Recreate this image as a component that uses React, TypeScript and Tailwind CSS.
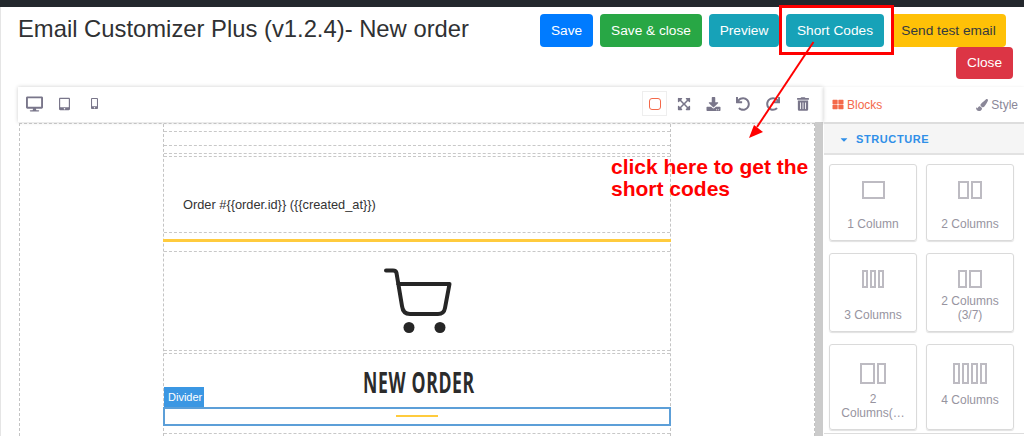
import React from 'react';
import {
  FaDesktop,
  FaTabletAlt,
  FaMobileAlt,
  FaExpandArrowsAlt,
  FaDownload,
  FaUndo,
  FaRedo,
  FaTrashAlt,
  FaThLarge,
  FaPaintBrush,
  FaCaretDown,
} from 'react-icons/fa';

const sans = { fontFamily: '"Liberation Sans", Arial, sans-serif' };

const BlockIcon = ({ cols, w, h }: { cols: number[]; w: number; h: number }) => (
  <div className="flex justify-center gap-[2px]" style={{ width: w, height: h }}>
    {cols.map((c, i) => (
      <div key={i} className="border-2 border-[#bdbbc2] h-full" style={{ flex: c }} />
    ))}
  </div>
);

const blocks = [
  { label: '1 Column', cols: [1], w: 23, ih: 18, h: 'h-[77px] pt-[16px]', gap: 'mt-[18px]' },
  { label: '2 Columns', cols: [1, 1], w: 24, ih: 18, h: 'h-[77px] pt-[16px]', gap: 'mt-[18px]' },
  { label: '3 Columns', cols: [1, 1, 1], w: 23, ih: 18, h: 'h-[79px] pt-[16px]', gap: 'mt-[20px]' },
  { label: '2 Columns (3/7)', cols: [3, 5], w: 24, ih: 18, h: 'h-[79px] pt-[16px]', gap: 'mt-[6px]' },
  { label: '2 Columns(…', cols: [6, 3], w: 26, ih: 21, h: 'h-[86px] pt-[18px]', gap: 'mt-[8px]' },
  { label: '4 Columns', cols: [1, 1, 1, 1], w: 34, ih: 21, h: 'h-[86px] pt-[18px]', gap: 'mt-[9px]' },
];

export default function App() {
  return (
    <div className="relative w-[1024px] h-[436px] overflow-hidden bg-white shadow-[inset_1px_0_0_#e5e5e5]" style={sans}>
      <div className="h-[7px] bg-[#23282d]" />

      <div className="flex justify-between h-[80px] pl-[18px] pr-[11px]">
        <h1 className="text-[23.8px] leading-[29px] pt-[7px] text-[#2f3133] h-[36px]">
          Email Customizer Plus (v1.2.4)- New order
        </h1>
        <div className="w-[480px] pt-[7px] pr-[7px] flex flex-wrap justify-end content-start text-[13.7px] leading-[32px] text-white">
          <button className="h-[33px] w-[53px] rounded-[4px] bg-[#007bff]">Save</button>
          <button className="h-[33px] w-[102px] ml-[7px] rounded-[4px] bg-[#28a745]">Save &amp; close</button>
          <button className="h-[33px] w-[70px] ml-[7px] rounded-[4px] bg-[#17a2b8]">Preview</button>
          <button className="h-[33px] w-[98px] ml-[7px] rounded-[4px] bg-[#17a2b8]">Short Codes</button>
          <button className="h-[33px] w-[115px] ml-[7px] rounded-[4px] bg-[#ffc107] text-[#343a40]">Send test email</button>
          <button className="h-[32px] w-[57px] -mr-[7px] rounded-[4px] bg-[#dc3545]">Close</button>
        </div>
      </div>

      <div className="flex h-[349px] ml-[18px]">
        <div className="w-[805px] flex flex-col">
          <div className="h-[35px] flex items-center justify-between pl-[8px] pr-[14px] pb-[2px] shadow-[0_0_4px_rgba(0,0,0,0.2)] text-[#79768a]">
            <div className="flex items-center">
              <FaDesktop className="w-[17px] h-[16px] mr-[16px]" />
              <FaTabletAlt className="w-[11px] h-[14px] mr-[21px]" />
              <FaMobileAlt className="w-[7px] h-[13px]" />
            </div>
            <div className="flex items-center">
              <div className="w-[25px] h-[25px] border border-[#eeeeee] flex items-center justify-center mr-[10px]">
                <div className="w-[12px] h-[12px] rounded-[3px] border border-[#f4694a]" />
              </div>
              <FaExpandArrowsAlt className="w-[14px] h-[14px] mr-[15px]" />
              <FaDownload className="w-[15px] h-[14px] mr-[15px]" />
              <FaUndo className="w-[14px] h-[14px] mr-[16px]" />
              <FaRedo className="w-[14px] h-[14px] mr-[17px]" />
              <FaTrashAlt className="w-[12px] h-[14px]" />
            </div>
          </div>

          <div className="flex flex-1 min-h-0">
            <div className="relative flex-1 mt-[1px] ml-[1px] border-t border-l border-r border-dashed border-[#c4c4c4] pl-[143px]">
              <div className="w-[508px] border-l border-r border-dashed border-[#c4c4c4]">
                <div className="h-[7px]" />
                <div className="h-[15px] border-y border-dashed border-[#c8c8c8]" />
                <div className="h-[7px]" />
                <div className="h-[3px] border-t border-dashed border-[#c8c8c8]" />
                <div className="h-[77px] border-y border-dashed border-[#c8c8c8] pt-[40px] pl-[19px] text-[12.8px] leading-[15px] text-[#333333]">
                  {'Order #{{order.id}} ({{created_at}})'}
                </div>
                <div className="h-[6px]" />
                <div className="h-[3px] -mx-[1px] bg-[#ffcb3d]" />
                <div className="h-[9px]" />
                <div className="h-[100px] border-y border-dashed border-[#c8c8c8] flex justify-center items-center">
                  <svg width="70" height="68" viewBox="382 266 70 68">
                    <path
                      d="M386 269.5H393Q396 269.5 396.5 272L402 305Q403 313 410 313H438Q444 313 445 307L449.5 283H398"
                      fill="none"
                      stroke="#262626"
                      strokeWidth="4"
                      strokeLinecap="round"
                      strokeLinejoin="round"
                    />
                    <circle cx="409" cy="326.5" r="5.5" fill="#262626" />
                    <circle cx="440" cy="326.5" r="5.5" fill="#262626" />
                  </svg>
                </div>
                <div className="h-[2px]" />
                <div className="relative h-[54px] border-t border-dashed border-[#c8c8c8] text-center">
                  <div
                    className="pt-[12px] text-[28px] leading-[32px] font-bold text-[#2b2b2b] origin-center scale-x-[0.63] translate-x-[2px] tracking-[1px]"
                    style={{ fontFamily: '"Open Sans", sans-serif' }}
                  >
                    NEW ORDER
                  </div>
                  <div className="absolute left-0 bottom-0 w-[40px] h-[20px] bg-[#3b97e3] text-white text-[11px] leading-[20px] pl-[4px] text-left">
                    Divider
                  </div>
                </div>
                <div className="h-[19px] -mx-[1px] border-2 border-[#5c9fd8] flex justify-center items-center">
                  <div className="w-[42px] h-[2px] bg-[#ffcb3d] -translate-y-[1px]" />
                </div>
                <div className="h-[7px]" />
                <div className="h-[3px] border-t border-dashed border-[#c8c8c8]" />
              </div>
            </div>
            <div className="w-[8px] bg-[#cbcbcb]" />
          </div>
        </div>

        <div className="flex-1 flex flex-col">
          <div className="h-[35px] flex items-center justify-between pl-[9px] pr-[6px] text-[12px] shadow-[0_1px_3px_rgba(0,0,0,0.15)]">
            <div className="flex items-center gap-[3px] text-[#f4694a]">
              <FaThLarge className="w-[12px] h-[11px]" />
              Blocks
            </div>
            <div className="flex items-center gap-[3px] text-[#8a8798]">
              <FaPaintBrush className="w-[12px] h-[12px]" />
              Style
            </div>
          </div>
          <div className="h-[2px] bg-[#dddddd] ml-[1px]" />
          <div className="h-[31px] ml-[1px] pt-[1px] border-b-2 border-[#e2e2e2] bg-[#f5f5f5] flex items-center pl-[15px] gap-[7px] text-[11px] font-bold tracking-[0.6px] text-[#2f8fe8]">
            <FaCaretDown className="w-[10px] h-[11px]" />
            STRUCTURE
          </div>
          <div className="ml-[1px] bg-white pl-[5px] pr-[5px] pt-[9px] pb-[3px] border-b border-[#dddddd]">
            <div className="grid grid-cols-[88px_88px] gap-x-[9px] gap-y-[12px]">
              {blocks.map((b) => (
                <div
                  key={b.label}
                  className={`${b.h} rounded-[3px] border border-[#dadada] shadow-[0_1px_1px_rgba(0,0,0,0.12)] flex flex-col items-center px-[8px] text-center text-[12px] leading-[14px] text-[#97949f]`}
                >
                  <BlockIcon cols={b.cols} w={b.w} h={b.ih} />
                  <div className={b.gap}>{b.label}</div>
                </div>
              ))}
            </div>
          </div>
        </div>
      </div>

      {/* annotation drawn over the screenshot */}
      <div className="absolute left-[779px] top-[5px] w-[115px] h-[50px] border-[3px] border-[#ff0000]" />
      <svg className="absolute left-0 top-0 pointer-events-none" width="1024" height="436">
        <line x1="813.5" y1="42" x2="757" y2="127" stroke="#ff0000" strokeWidth="2" />
        <polygon points="749,138 754,125 763,132" fill="#ff0000" />
      </svg>
      <div className="absolute left-[611px] top-[156px] w-[205px] text-[21px] leading-[22px] font-bold text-[#ff0000]">
        click here to get the short codes
      </div>
    </div>
  );
}
